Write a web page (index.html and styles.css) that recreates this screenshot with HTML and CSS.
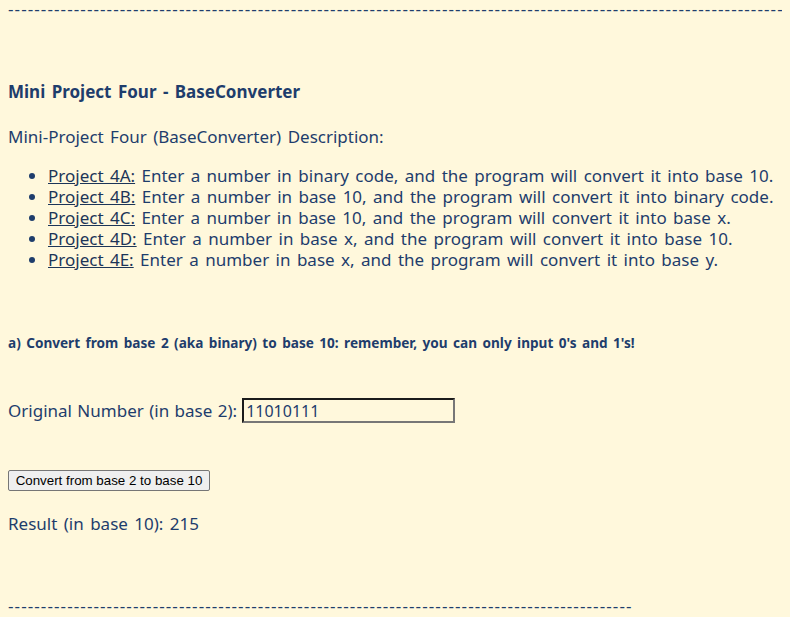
FILE: index.html
```html
<!DOCTYPE html>
<html>
<head>
<meta charset="utf-8">
<title>Mini Project Four - BaseConverter</title>
<link rel="stylesheet" href="styles.css">
</head>
<body>
<div class="rule rule-top">-------------------------------------------------------------------------------------------------------------------------</div>
<h4 class="title">Mini Project Four - BaseConverter</h4>
<p class="desc">Mini-Project Four (BaseConverter) Description:</p>
<ul class="projects">
  <li><a href="#">Project 4A:</a> Enter a number in binary code, and the program will convert it into base 10.</li>
  <li><a href="#">Project 4B:</a> Enter a number in base 10, and the program will convert it into binary code.</li>
  <li><a href="#">Project 4C:</a> Enter a number in base 10, and the program will convert it into base x.</li>
  <li><a href="#">Project 4D:</a> Enter a number in base x, and the program will convert it into base 10.</li>
  <li><a href="#">Project 4E:</a> Enter a number in base x, and the program will convert it into base y.</li>
</ul>
<h5 class="task">a) Convert from base 2 (aka binary) to base 10: remember, you can only input 0's and 1's!</h5>
<div class="field">
  <label class="field-label" for="num">Original Number (in base 2):</label>
  <input class="field-input" id="num" type="text" value="11010111">
</div>
<div class="actions">
  <button class="convert-btn" type="button">Convert from base 2 to base 10</button>
</div>
<p class="result">Result (in base 10): 215</p>
<div class="rule rule-bottom">-----------------------------------------------------------------------------------------------</div>
</body>
</html>
```
FILE: styles.css
```css
html, body {
  overflow: hidden;
}
body {
  margin: 0 8px;
  background: #fff8dc;
  color: #1e3d6c;
  font-family: "Noto Sans", "Open Sans", sans-serif;
  font-size: 17px;
  line-height: 21px;
  word-spacing: 2px;
}
.rule {
  white-space: nowrap;
  letter-spacing: 1.1px;
  word-spacing: normal;
  height: 15px;
  line-height: 15px;
}
.rule-top {
  margin-top: 0;
  padding-top: 1px;
}
.rule-bottom {
  margin-top: 64px;
}
.title {
  margin: 65px 0 24px;
  font-size: 17px;
  font-weight: bold;
}
.desc {
  margin: 0 0 18px;
}
.projects {
  margin: 0;
  padding-left: 40px;
}
.projects a {
  color: #1c3558;
  text-decoration: underline;
}
.task {
  margin: 64px 0 0;
  font-size: 13.6px;
  line-height: 17px;
  font-weight: bold;
  word-spacing: 1.9px;
}
.field {
  margin-top: 47px;
  display: flex;
  align-items: baseline;
  gap: 5px;
}
.field-label {
  word-spacing: 1px;
}
.field-input {
  box-sizing: border-box;
  width: 213px;
  height: 25px;
  padding: 1px 2px;
  border-style: solid;
  border-width: 2px;
  border-color: #1b1b1b #777777 #777777 #1b1b1b;
  background: transparent;
  color: #1e3d6c;
  font-family: "Noto Sans", sans-serif;
  font-size: 16px;
  word-spacing: normal;
}
.actions {
  margin-top: 45px;
  height: 21px;
}
.convert-btn {
  box-sizing: border-box;
  height: 21px;
  width: 202px;
  padding: 1px 6px;
  font-family: "Liberation Sans", Arial, sans-serif;
  font-size: 13.33px;
  word-spacing: normal;
  color: #000;
  background: #efefef;
  border: 1px solid #767676;
  border-radius: 2px;
}
.result {
  margin: 24px 0 0;
}
```
